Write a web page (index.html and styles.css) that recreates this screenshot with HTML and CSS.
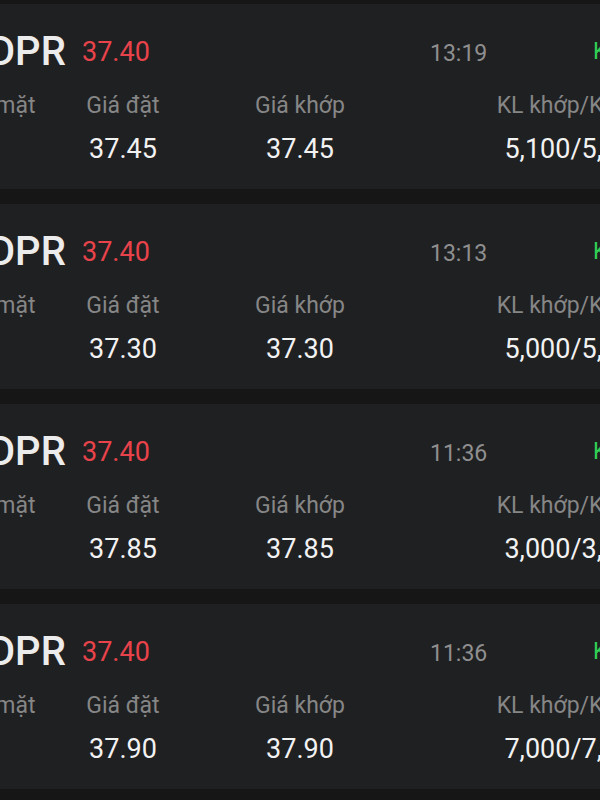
FILE: index.html
```html
<!DOCTYPE html>
<html lang="vi">
<head>
<meta charset="utf-8">
<title>Sổ lệnh</title>
<link rel="stylesheet" href="styles.css">
</head>
<body>
<div class="list">
  <div class="card">
    <div class="head">
      <span class="ticker">DPR</span>
      <span class="price">37.40</span>
      <span class="time">13:19</span>
      <span class="status">Khớp</span>
    </div>
    <div class="cols labels">
      <span>Tiền mặt</span><span>Giá đặt</span><span>Giá khớp</span><span>KL khớp/KL đặt</span>
    </div>
    <div class="cols values">
      <span></span><span>37.45</span><span>37.45</span><span>5,100/5,100</span>
    </div>
  </div>
  <div class="card">
    <div class="head">
      <span class="ticker">DPR</span>
      <span class="price">37.40</span>
      <span class="time">13:13</span>
      <span class="status">Khớp</span>
    </div>
    <div class="cols labels">
      <span>Tiền mặt</span><span>Giá đặt</span><span>Giá khớp</span><span>KL khớp/KL đặt</span>
    </div>
    <div class="cols values">
      <span></span><span>37.30</span><span>37.30</span><span>5,000/5,000</span>
    </div>
  </div>
  <div class="card">
    <div class="head">
      <span class="ticker">DPR</span>
      <span class="price">37.40</span>
      <span class="time">11:36</span>
      <span class="status">Khớp</span>
    </div>
    <div class="cols labels">
      <span>Tiền mặt</span><span>Giá đặt</span><span>Giá khớp</span><span>KL khớp/KL đặt</span>
    </div>
    <div class="cols values">
      <span></span><span>37.85</span><span>37.85</span><span>3,000/3,000</span>
    </div>
  </div>
  <div class="card">
    <div class="head">
      <span class="ticker">DPR</span>
      <span class="price">37.40</span>
      <span class="time">11:36</span>
      <span class="status">Khớp</span>
    </div>
    <div class="cols labels">
      <span>Tiền mặt</span><span>Giá đặt</span><span>Giá khớp</span><span>KL khớp/KL đặt</span>
    </div>
    <div class="cols values">
      <span></span><span>37.90</span><span>37.90</span><span>7,000/7,000</span>
    </div>
  </div>
</div>
</body>
</html>
```
FILE: styles.css
```css
html, body {
  margin: 0;
  padding: 0;
}
body {
  width: 600px;
  height: 800px;
  overflow: hidden;
  background: #161617;
  font-family: Roboto, "Noto Sans", "Liberation Sans", sans-serif;
}
.list {
  display: flex;
  flex-direction: column;
  gap: 15px;
  padding-top: 4px;
  margin-left: -40px;
  width: 900px;
}
.card {
  background: #1f2022;
  height: 185px;
  box-sizing: border-box;
  padding-top: 24px;
  white-space: nowrap;
}
.head {
  display: grid;
  grid-template-columns: 94px 348px 163px auto;
  align-items: center;
  height: 46px;
  padding-left: 28px;
}
.ticker {
  font-size: 40px;
  font-weight: 500;
  color: #ececec;
  margin-left: 1px;
}
.price {
  font-size: 27px;
  color: #e8434b;
}
.time {
  font-size: 23px;
  color: #8f8f8f;
  padding-top: 4px;
}
.status {
  font-size: 23px;
  color: #2fce55;
}
.cols {
  display: grid;
  grid-template-columns: 141px 124px 230px 322px;
  margin-left: -40px;
  text-align: center;
}
.labels {
  margin-top: 17px;
  line-height: 30px;
  font-size: 23px;
  color: #868686;
}
.values {
  margin-top: 11px;
  line-height: 34px;
  font-size: 27px;
  color: #f2f2f2;
}
```
